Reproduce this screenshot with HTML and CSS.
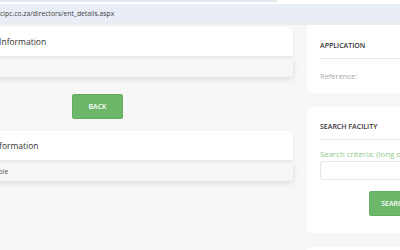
FILE: index.html
```html
<!DOCTYPE html>
<html lang="en">
  <head>
    <meta charset="UTF-8" />
    <meta name="viewport" content="width=device-width, initial-scale=1.0" />
    <title>Director Details</title>
    <link rel="stylesheet" href="styles.css">
  </head>
  <body>
    <div class="browser-top">
      <div class="tab-strip"></div>
      <div class="address-bar">cipc.co.za/directors/ent_details.aspx</div>
    </div>

    <div class="page">
      <div class="main-col">
        <div class="card">
          <div class="card-head">Enterprise Information</div>
          <div class="card-body"></div>
        </div>

        <div class="back-row">
          <button class="btn">BACK</button>
        </div>

        <div class="card">
          <div class="card-head second">Director Information</div>
          <div class="card-body">Not available</div>
        </div>
      </div>

      <div class="side-col">
        <div class="panel panel-app">
          <h3>APPLICATION</h3>
          <p class="muted">Reference:</p>
        </div>

        <div class="panel panel-search">
          <h3>SEARCH FACILITY</h3>
          <label class="criteria">Search criteria: (long or short name)</label>
          <input type="text" class="search-box" />
          <div class="search-row">
            <button class="btn">SEARCH</button>
          </div>
        </div>

        <div class="panel panel-next"></div>
      </div>
    </div>
  </body>
</html>
```

FILE: styles.css
```css
body {
  font-family: "Open Sans", Arial, sans-serif;
  background-color: #f7f7f7;
  color: #333;
  margin: 0;
  padding: 0;
  overflow: hidden;
}

.browser-top {
  background-color: #fff;
  border-bottom: 2px solid #ecece8;
}

.tab-strip {
  width: 277px;
  height: 2px;
  background-color: #e3e8f1;
  margin-bottom: 2px;
}

.address-bar {
  background-color: #e9edf6;
  height: 19px;
  line-height: 19px;
  font-size: 6.8px;
  color: #444;
  white-space: nowrap;
}

.page {
  display: flex;
  gap: 14px;
  margin-left: -200px;
}

.main-col {
  width: 493px;
  flex-shrink: 0;
  padding-top: 2px;
}

.card-head {
  background-color: #fff;
  height: 29px;
  line-height: 29px;
  padding-left: 156px;
  font-size: 8.5px;
  white-space: nowrap;
  border-radius: 6px 6px 0 0;
  box-shadow: 0 1px 3px rgba(0, 0, 0, 0.07);
}

.card-head.second {
  padding-left: 157px;
}

.card-body {
  background-color: #f7f7f7;
  height: 18px;
  line-height: 18px;
  margin-top: 3px;
  padding-left: 167px;
  font-size: 6.8px;
  color: #555;
  white-space: nowrap;
  border-radius: 0 0 4px 4px;
  box-shadow: 0 2px 6px rgba(0, 0, 0, 0.12);
}

.back-row {
  display: flex;
  padding: 17px 0 12px 272px;
}

.btn {
  background-color: #6db76b;
  color: #fff;
  border: 1px solid #62ad60;
  border-radius: 2px;
  font-family: inherit;
  font-size: 7px;
  font-weight: 600;
  width: 51px;
  height: 25px;
  padding: 0;
}

.side-col {
  width: 200px;
  flex-shrink: 0;
}

.panel {
  background-color: #fff;
  border-radius: 3px;
  padding: 0 0 0 13px;
  margin-bottom: 14px;
}

.panel h3 {
  margin: 0;
  font-size: 7px;
  font-weight: 600;
  text-transform: uppercase;
  color: #333;
  padding-bottom: 8px;
  border-bottom: 1px solid #e8e8e8;
}

.panel-app {
  height: 68px;
}

.panel-app h3 {
  padding-top: 16px;
}

.muted {
  margin: 0;
  padding-top: 12px;
  font-size: 7.5px;
  color: #aaa;
}

.panel-search {
  height: 126px;
}

.panel-search h3 {
  padding-top: 15px;
}

.criteria {
  display: block;
  padding-top: 9px;
  font-size: 7.8px;
  color: #8fca8c;
  white-space: nowrap;
}

.search-box {
  display: block;
  box-sizing: border-box;
  width: 100%;
  height: 19px;
  margin-top: 2px;
  border: 1px solid #e6e6e6;
  border-radius: 3px;
}

.search-row {
  display: flex;
  padding: 11px 0 0 49px;
}

.panel-next {
  height: 40px;
}
```
